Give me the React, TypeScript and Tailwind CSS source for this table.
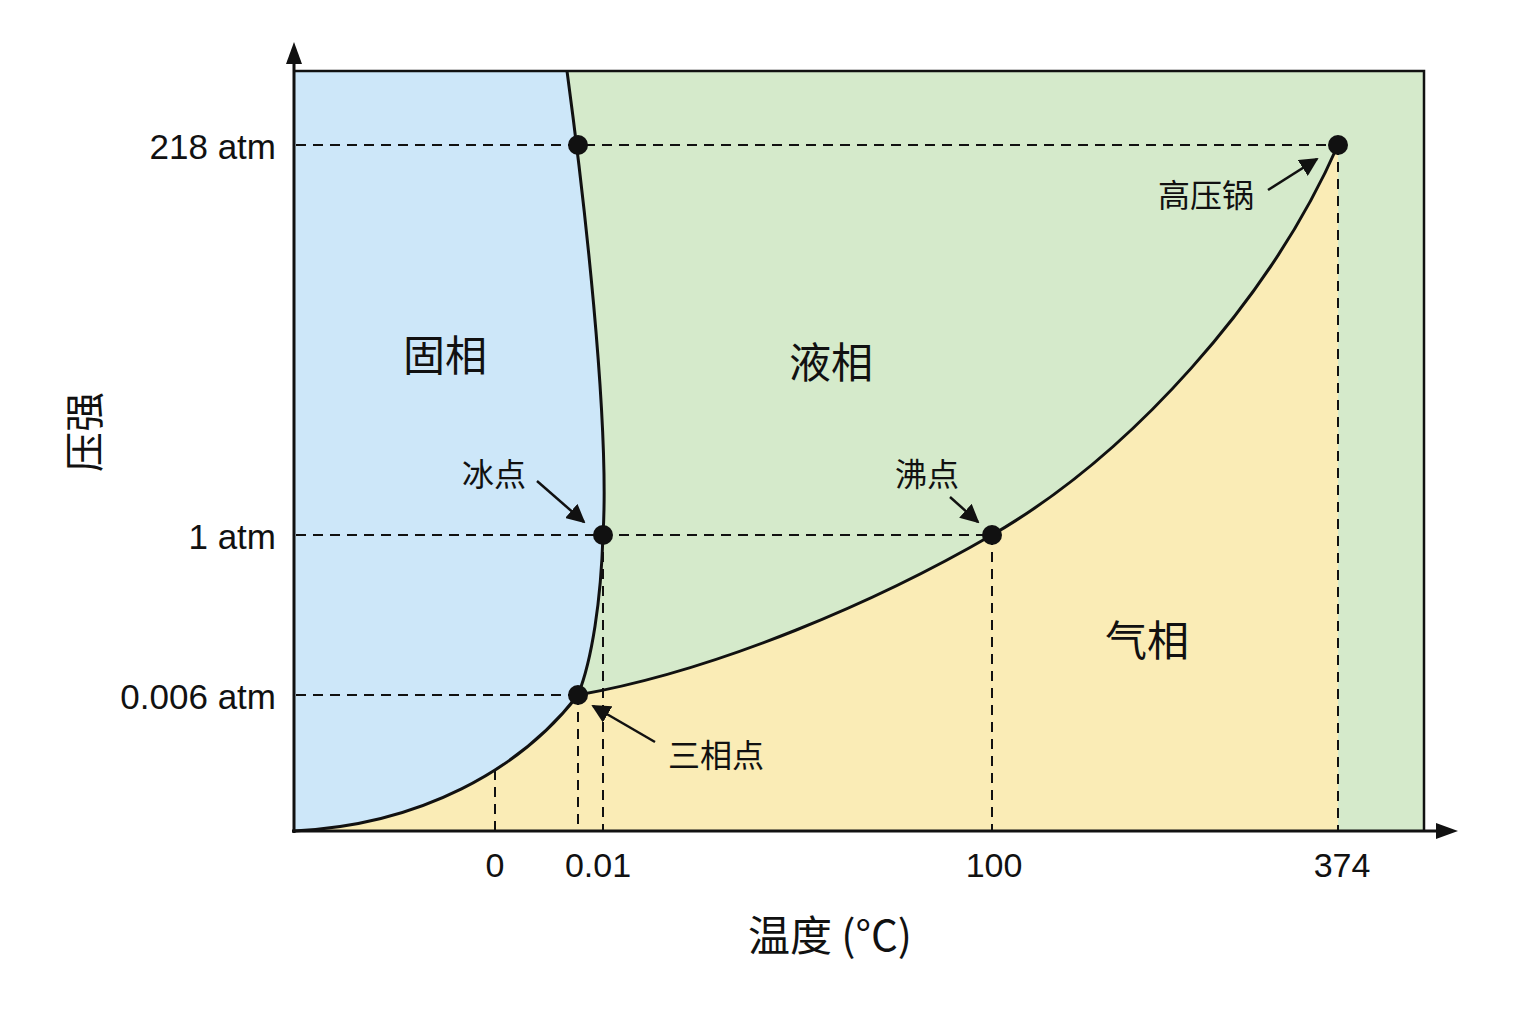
import React from 'react';

const ink = '#111111';

// anchor points of the phase diagram (page pixels)
const triple = { x: 578, y: 695 };
const freeze = { x: 603, y: 535 };
const boil = { x: 992, y: 535 };
const critical = { x: 1338, y: 145 };
const top218 = { x: 578, y: 145 };

const melting = 'M567,71 C583,190 610,420 603,535 C601,600 592,660 578,695';
const sublimation = 'M294,831 C420,825 520,770 578,695';
const vaporization = 'M578,695 C720,670 880,600 992,535 C1130,455 1270,300 1338,145';

function Dot({ x, y }: { x: number; y: number }) {
  return <circle cx={x} cy={y} r={10} fill={ink} />;
}

function Dash({ x1, y1, x2, y2 }: { x1: number; y1: number; x2: number; y2: number }) {
  return <line x1={x1} y1={y1} x2={x2} y2={y2} stroke={ink} strokeWidth={2} strokeDasharray="10 7" />;
}

function Pointer({ x1, y1, x2, y2 }: { x1: number; y1: number; x2: number; y2: number }) {
  return <line x1={x1} y1={y1} x2={x2} y2={y2} stroke={ink} strokeWidth={2.5} markerEnd="url(#head)" />;
}

const cjk = '"Noto Sans CJK SC", "Noto Sans", sans-serif';
const latin = '"Liberation Sans", Arial, sans-serif';

export default function App() {
  return (
    <div className="w-[1536px] h-[1024px] bg-white overflow-hidden">
      <svg width={1536} height={1024} viewBox="0 0 1536 1024" className="block">
        <defs>
          <marker id="head" viewBox="0 0 10 10" refX="9" refY="5" markerWidth="7.5" markerHeight="7.5" orient="auto">
            <path d="M0,0 L10,5 L0,10 Z" fill={ink} />
          </marker>
        </defs>

        {/* phase regions */}
        <rect x={294} y={71} width={1130} height={760} fill="#d5eacb" />
        <path d="M294,71 L567,71 C583,190 610,420 603,535 C601,600 592,660 578,695 C520,770 420,825 294,831 Z" fill="#cde7f9" />
        <path d={`${sublimation} ${vaporization.replace('M578,695', '')} L1338,831 Z`} fill="#faecb6" />

        {/* guide lines */}
        <Dash x1={296} y1={145} x2={critical.x} y2={145} />
        <Dash x1={296} y1={535} x2={boil.x} y2={535} />
        <Dash x1={296} y1={695} x2={triple.x} y2={695} />
        <Dash x1={495} y1={770} x2={495} y2={830} />
        <Dash x1={triple.x} y1={695} x2={triple.x} y2={830} />
        <Dash x1={freeze.x} y1={535} x2={freeze.x} y2={830} />
        <Dash x1={boil.x} y1={535} x2={boil.x} y2={830} />
        <Dash x1={critical.x} y1={145} x2={critical.x} y2={830} />

        {/* phase boundaries */}
        <path d={melting} fill="none" stroke={ink} strokeWidth={3} />
        <path d={sublimation} fill="none" stroke={ink} strokeWidth={3} />
        <path d={vaporization} fill="none" stroke={ink} strokeWidth={3} />

        {/* frame and axes */}
        <polyline points="294,71 1424,71 1424,831" fill="none" stroke={ink} strokeWidth={2.5} />
        <line x1={294} y1={833} x2={294} y2={60} stroke={ink} strokeWidth={3} />
        <path d="M294,42 L302,64 L286,64 Z" fill={ink} />
        <line x1={292} y1={831} x2={1440} y2={831} stroke={ink} strokeWidth={3} />
        <path d="M1458,831 L1436,823 L1436,839 Z" fill={ink} />

        <Dot {...top218} />
        <Dot {...critical} />
        <Dot {...freeze} />
        <Dot {...boil} />
        <Dot {...triple} />

        {/* annotation arrows */}
        <Pointer x1={537} y1={481} x2={584} y2={522} />
        <Pointer x1={950} y1={497} x2={978} y2={522} />
        <Pointer x1={655} y1={742} x2={593} y2={706} />
        <Pointer x1={1268} y1={190} x2={1317} y2={159} />

        {/* y tick labels */}
        <g fontFamily={latin} fontSize={35} fill={ink} textAnchor="end" dominantBaseline="central">
          <text x={276} y={146}>218 atm</text>
          <text x={276} y={536}>1 atm</text>
          <text x={276} y={696}>0.006 atm</text>
        </g>

        {/* x tick labels */}
        <g fontFamily={latin} fontSize={34} fill={ink} textAnchor="middle" dominantBaseline="central">
          <text x={495} y={865}>0</text>
          <text x={598} y={865}>0.01</text>
          <text x={994} y={865}>100</text>
          <text x={1342} y={865}>374</text>
        </g>

        {/* axis titles */}
        <text x={830} y={932} fontFamily={cjk} fontSize={42} fill={ink} textAnchor="middle" dominantBaseline="central">
          温度 (°C)
        </text>
        <text
          x={82}
          y={432}
          fontFamily={cjk}
          fontSize={40}
          fill={ink}
          textAnchor="middle"
          dominantBaseline="central"
          transform="rotate(-90 82 432)"
        >
          压强
        </text>

        {/* region names */}
        <g fontFamily={cjk} fontSize={42} fill={ink} textAnchor="middle" dominantBaseline="central">
          <text x={445} y={352}>固相</text>
          <text x={831} y={359}>液相</text>
          <text x={1147} y={637}>气相</text>
        </g>

        {/* point names */}
        <g fontFamily={cjk} fontSize={32} fill={ink} textAnchor="middle" dominantBaseline="central">
          <text x={494} y={472}>冰点</text>
          <text x={927} y={472}>沸点</text>
          <text x={716} y={753}>三相点</text>
          <text x={1206} y={193}>高压锅</text>
        </g>
      </svg>
    </div>
  );
}
